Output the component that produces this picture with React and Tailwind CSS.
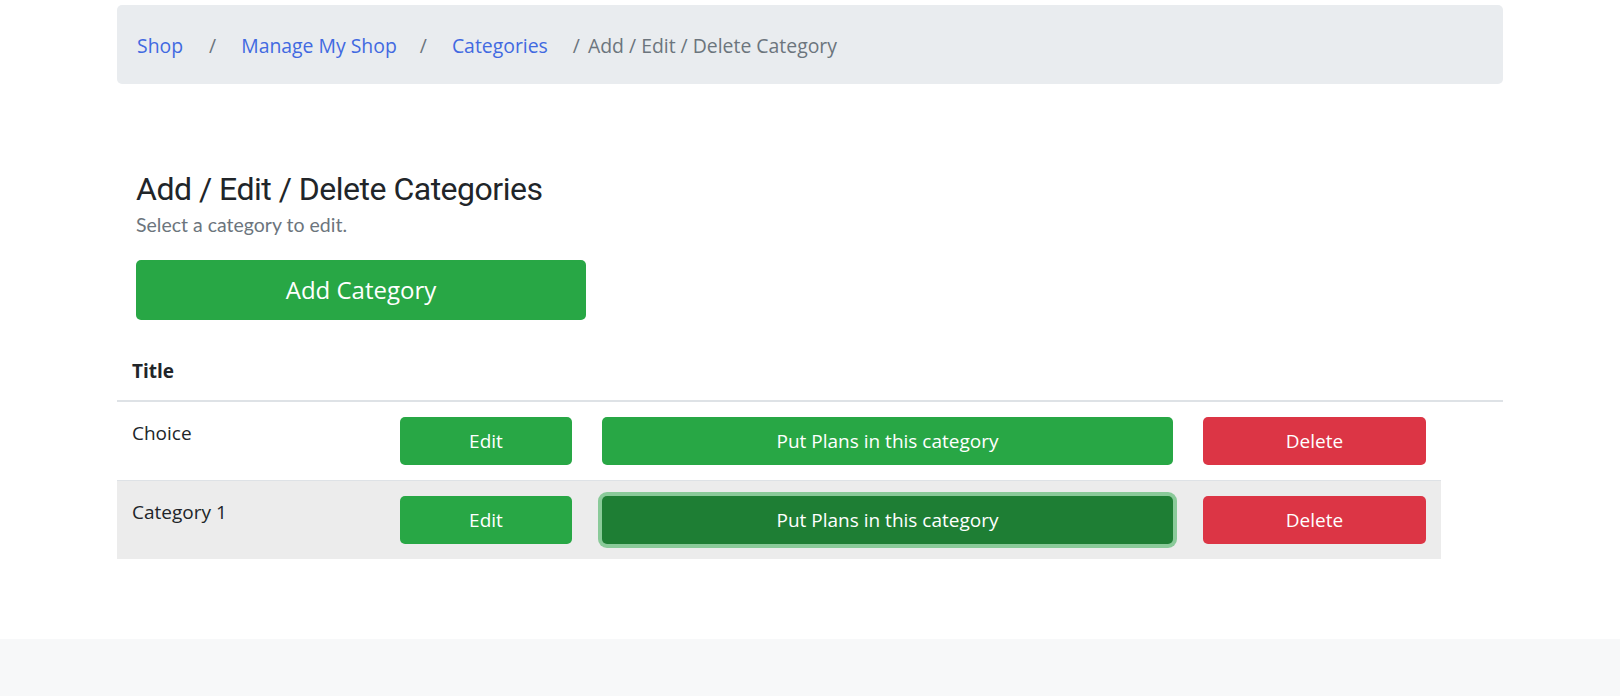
import React from 'react';

const sans = { fontFamily: '"Open Sans", "Noto Sans", sans-serif' };

const Breadcrumb = () => (
  <nav className="mt-[5px] h-[79px] pt-[3px] bg-[#e9ecef] rounded-[5px] pl-5 flex items-center text-[19.4px]">
    <a className="text-[#4169e1]">Shop</a>
    <span className="text-[#6c757d] ml-[26px] mr-[25px]">/</span>
    <a className="text-[#4169e1]">Manage My Shop</a>
    <span className="text-[#6c757d] ml-[23px] mr-[25px]">/</span>
    <a className="text-[#4169e1]">Categories</a>
    <span className="text-[#6c757d] ml-[25px] mr-[8px]">/</span>
    <span className="text-[#6c757d]">Add / Edit / Delete Category</span>
  </nav>
);

const rows = [
  { title: 'Choice', active: false, striped: false },
  { title: 'Category 1', active: true, striped: true },
];

const Row = ({ row }) => (
  <div
    className={
      'grid grid-cols-[268px_202px_601px_253px] w-[1324px] h-[78px] box-content ' +
      (row.striped ? 'bg-[#ececec] border-t border-[#dee2e6]' : '')
    }
  >
    <div className="px-[15px] pt-[16px] text-[19px] leading-[30px] text-[#212529]">{row.title}</div>
    <div className="px-[15px] pt-[15px]">
      <button className="w-full h-12 rounded-[5px] bg-[#28a745] text-white text-[19px]">Edit</button>
    </div>
    <div className="px-[15px] pt-[15px]">
      <button
        className={
          'w-full h-12 rounded-[5px] text-white text-[19px] ' +
          (row.active ? 'bg-[#1e7e34] ring-4 ring-[#28a745]/50' : 'bg-[#28a745]')
        }
      >
        Put Plans in this category
      </button>
    </div>
    <div className="px-[15px] pt-[15px]">
      <button className="w-full h-12 rounded-[5px] bg-[#dc3545] text-white text-[19px]">Delete</button>
    </div>
  </div>
);

export default function App() {
  return (
    <div className="min-h-screen bg-white flex flex-col" style={sans}>
      <div className="w-[1386px] mx-auto">
        <Breadcrumb />

        <div className="pl-[19px] pt-[85px]">
          <h1
            className="text-[32px] leading-[40px] text-[#212529] tracking-[-0.5px]"
            style={{ fontFamily: 'Roboto, sans-serif' }}
          >
            Add / Edit / Delete Categories
          </h1>
          <p
            className="text-[19.5px] leading-[28px] text-[#6c757d] mt-[2px]"
            style={{ fontFamily: 'Lato, sans-serif' }}
          >
            Select a category to edit.
          </p>
          <button className="mt-[21px] w-[450px] h-[60px] rounded-[5px] bg-[#28a745] text-white text-[24px]">
            Add Category
          </button>
        </div>

        <div>
          <div className="h-[82px] border-b-2 border-[#dee2e6] pl-[15px] pt-[37px] leading-[28px] text-[19px] font-bold text-[#212529]">
            Title
          </div>
          {rows.map((r) => (
            <Row key={r.title} row={r} />
          ))}
        </div>
      </div>

      <div className="mt-[80px] flex-1 min-h-[57px] bg-[#f7f8f9]" />
    </div>
  );
}
